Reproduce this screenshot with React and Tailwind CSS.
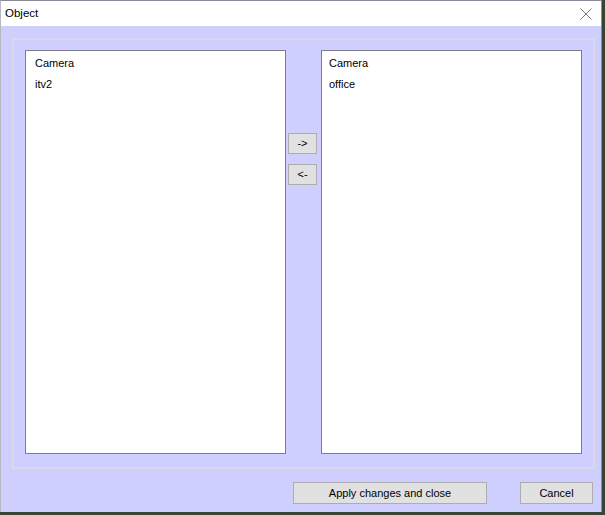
import React from "react";

const FONT = { fontFamily: '"Liberation Sans", Arial, sans-serif' };

function ListBox({ items, pad = "pl-[9px]" }) {
  return (
    <div className={"w-[261px] h-[404px] bg-white border border-[#7c7c8c] pt-[2px] " + pad}>
      {items.map((it, i) => (
        <div key={i} className="h-[21px] leading-[21px] text-[11px] text-black">
          {it}
        </div>
      ))}
    </div>
  );
}

function Btn({ children, className = "" }) {
  return (
    <button
      className={
        "bg-[#e1e1e1] border border-[#adadad] text-[11px] text-black flex items-center justify-center " +
        className
      }
    >
      {children}
    </button>
  );
}

export default function App() {
  return (
    <div className="w-[605px] h-[515px] bg-[#3a4435]" style={FONT}>
      <div className="w-[602px] h-[512px] flex flex-col border-t border-l border-r border-[#8a8a9a] border-l-[#b8b8c4]">
        {/* Title bar */}
        <div className="h-[25px] bg-white flex items-center justify-between pl-[4px] pr-[9px] shrink-0">
          <span className="text-[11.5px] text-black">Object</span>
          <svg width="12" height="12" viewBox="0 0 12 12">
            <path d="M0.5 0.5 L11.5 11.5 M11.5 0.5 L0.5 11.5" stroke="#7a7a7a" strokeWidth="1" />
          </svg>
        </div>

        {/* Client area */}
        <div className="flex-1 bg-[#cfcfff] pl-[11px] pr-[6px] pt-[12px] flex flex-col">
          <div className="w-[583px] h-[431px] border-2 border-[#d9d9ea] pt-[10px] pl-[11px] flex">
            <ListBox items={["Camera", "itv2"]} />
            <div className="w-[35px] flex flex-col items-start pl-[2px] pt-[83px] gap-[10px]">
              <Btn className="w-[29px] h-[21px]">-&gt;</Btn>
              <Btn className="w-[29px] h-[21px]">&lt;-</Btn>
            </div>
            <ListBox items={["Camera", "office"]} pad="pl-[7px]" />
          </div>

          <div className="flex justify-end pt-[13px] pr-[2px] gap-[33px]">
            <Btn className="w-[194px] h-[22px]">Apply changes and close</Btn>
            <Btn className="w-[73px] h-[22px]">Cancel</Btn>
          </div>
        </div>
      </div>
    </div>
  );
}
